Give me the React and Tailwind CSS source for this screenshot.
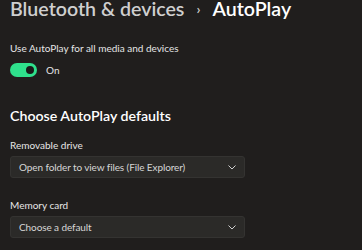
import React, { useState } from "react";

const Chevron = () => (
  <svg width="8" height="5" viewBox="0 0 8 5" className="shrink-0">
    <path d="M0.5 0.5 L4 4 L7.5 0.5" fill="none" stroke="#cfcfcf" strokeWidth="1" />
  </svg>
);

const Dropdown = ({ value }) => (
  <button className="flex items-center justify-between w-[235px] h-[22px] pl-[8px] pr-[8px] bg-[#2b2a28] border border-[#343331] rounded-[3px] text-[10px] tracking-[-0.1px] text-[#d6d6d6] whitespace-nowrap text-left">
    <span>{value}</span>
    <Chevron />
  </button>
);

const App = () => {
  const [on, setOn] = useState(true);

  return (
    <div
      className="w-[362px] h-[250px] bg-[#201e1d] text-white overflow-hidden pl-[10px]"
      style={{ fontFamily: "Lato, 'Noto Sans', sans-serif" }}
    >
      <div className="flex items-center h-[18px] text-[19.6px] font-semibold leading-[18px] whitespace-nowrap">
        <span className="text-[#cfcfcf]">Bluetooth &amp; devices</span>
        <span className="text-[#cfcfcf] text-[14px] mx-[12px]">›</span>
        <span className="text-white">AutoPlay</span>
      </div>

      <div className="mt-[23px] text-[10px] text-[#e6e6e6] leading-[14px]">
        Use AutoPlay for all media and devices
      </div>

      <div className="flex items-center mt-[8px] gap-[9px]">
        <button
          onClick={() => setOn(!on)}
          className="relative w-[27px] h-[14px] rounded-full bg-[#2fe08c]"
        >
          <span className="absolute right-[3px] top-[3px] w-[8px] h-[8px] rounded-full bg-[#1a1a1a]" />
        </button>
        <span className="text-[10px] text-[#e6e6e6] leading-[14px]">{on ? "On" : "Off"}</span>
      </div>

      <div className="mt-[29px] text-[14.2px] font-semibold text-white leading-[20px]">
        Choose AutoPlay defaults
      </div>

      <div className="mt-[12px] text-[10px] text-[#e6e6e6] leading-[14px]">Removable drive</div>
      <div className="mt-[4px]">
        <Dropdown value="Open folder to view files (File Explorer)" />
      </div>

      <div className="mt-[20px] text-[10px] text-[#e6e6e6] leading-[14px]">Memory card</div>
      <div className="mt-[4px]">
        <Dropdown value="Choose a default" />
      </div>
    </div>
  );
};

export default App;
